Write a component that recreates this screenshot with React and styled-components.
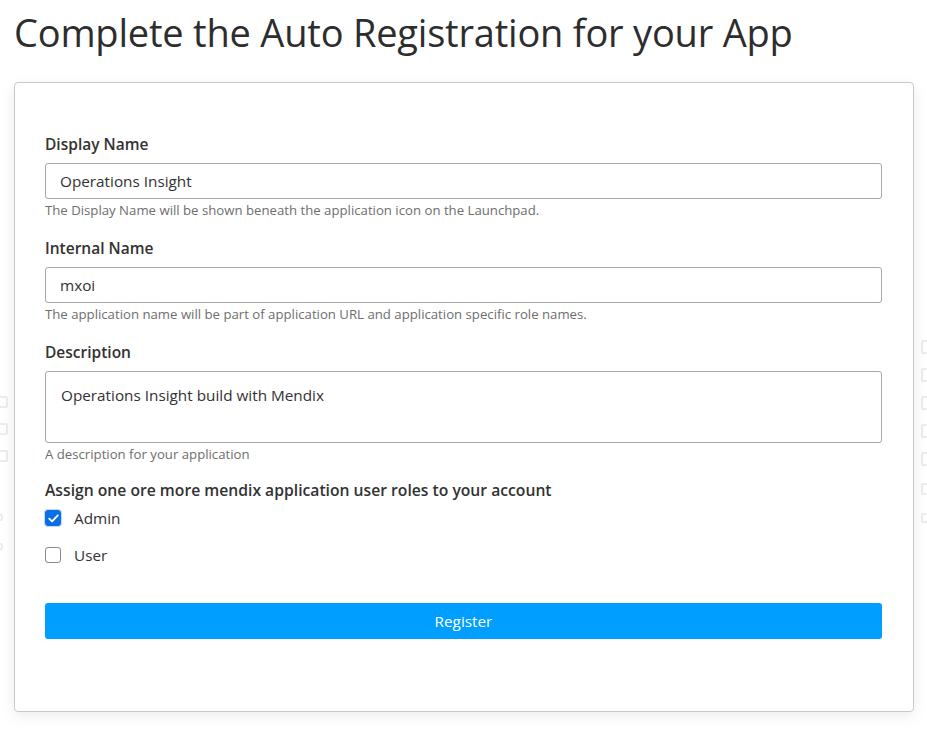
import React from "react";
import styled, { createGlobalStyle } from "styled-components";

const Global = createGlobalStyle`
  html, body { margin: 0; padding: 0; background: #fff; }
  body { font-family: "Open Sans", "Noto Sans", sans-serif; color: #323232; }
  * { box-sizing: border-box; }
`;

const Page = styled.div`
  position: relative;
  padding: 6px 14px 16px 14px;
  overflow: hidden;
`;

const Title = styled.h1`
  margin: 0 0 24px 0;
  font-size: 38px;
  font-weight: 400;
  line-height: 52px;
  color: #2d2d2d;
  letter-spacing: -0.2px;
`;

const Ghost = styled.div`
  position: absolute;
  top: 0;
  ${(p) => (p.$side === "left" ? "left: -4px;" : "right: -6px;")}
  width: 16px;
  height: 100%;
  z-index: 0;
`;

const GhostBox = styled.span`
  position: absolute;
  left: 0;
  width: ${(p) => p.$s}px;
  height: ${(p) => p.$s}px;
  border: 2px solid #ececec;
  border-radius: 2px;
`;

const Card = styled.div`
  position: relative;
  z-index: 1;
  width: 900px;
  background: #fff;
  border: 1px solid #c8c8c8;
  border-radius: 4px;
  box-shadow: 0 4px 14px rgba(0, 0, 0, 0.08);
  padding: 50px 31px 72px 30px;
`;

const Field = styled.div`
  display: flex;
  flex-direction: column;
  margin-bottom: ${(p) => p.$mb || 18}px;
`;

const Label = styled.label`
  font-size: ${(p) => p.$fs || 15.5}px;
  font-weight: 600;
  color: #323232;
  line-height: 22px;
  margin-bottom: ${(p) => p.$mb ?? 8}px;
`;

const Input = styled.div`
  height: ${(p) => p.$h || 36}px;
  border: 1px solid #a8a8a8;
  border-radius: 3px;
  padding: ${(p) => (p.$area ? "13px 15px" : "0 14px")};
  display: flex;
  align-items: ${(p) => (p.$area ? "flex-start" : "center")};
  font-size: 15.3px;
  color: #323232;
  line-height: 20px;
`;

const Hint = styled.div`
  font-size: 13.2px;
  color: #6e6e6e;
  line-height: 18px;
  margin-top: 2px;
`;

const Check = styled.label`
  display: flex;
  align-items: center;
  gap: 13px;
  font-size: 15.3px;
  color: #323232;
  height: 22px;
  margin-bottom: ${(p) => p.$mb || 0}px;
`;

const Box = styled.span`
  width: 16px;
  height: 16px;
  border-radius: 3px;
  border: 1px solid ${(p) => (p.$on ? "#0a6ee8" : "#8a8a8a")};
  background: ${(p) => (p.$on ? "#0a6ee8" : "#fff")};
  display: inline-flex;
  align-items: center;
  justify-content: center;
  box-shadow: ${(p) => (p.$on ? "0 0 0 1px rgba(10,110,232,0.25)" : "none")};
`;

const Button = styled.button`
  display: block;
  width: 100%;
  height: 36px;
  border: none;
  border-radius: 3px;
  background: #009fff;
  color: #fff;
  font-family: inherit;
  font-size: 15.3px;
  margin-top: 37px;
  cursor: pointer;
`;

const leftBoxes = [
  { t: 396, s: 12 },
  { t: 423, s: 12 },
  { t: 450, s: 12 },
  { t: 514, s: 7 },
  { t: 543, s: 7 },
];
const rightBoxes = [
  { t: 340, s: 14 },
  { t: 368, s: 14 },
  { t: 396, s: 14 },
  { t: 424, s: 14 },
  { t: 452, s: 14 },
  { t: 483, s: 12 },
  { t: 513, s: 10 },
];

export default function App() {
  return (
    <>
      <Global />
      <Page>
        <Ghost $side="left">
          {leftBoxes.map((b, i) => (
            <GhostBox key={i} $s={b.s} style={{ top: b.t }} />
          ))}
        </Ghost>
        <Ghost $side="right">
          {rightBoxes.map((b, i) => (
            <GhostBox key={i} $s={b.s} style={{ top: b.t, left: 4 }} />
          ))}
        </Ghost>
        <Title>Complete the Auto Registration for your App</Title>
        <Card>
          <Field>
            <Label>Display Name</Label>
            <Input>Operations Insight</Input>
            <Hint>The Display Name will be shown beneath the application icon on the Launchpad.</Hint>
          </Field>
          <Field>
            <Label>Internal Name</Label>
            <Input>mxoi</Input>
            <Hint>The application name will be part of application URL and application specific role names.</Hint>
          </Field>
          <Field $mb={16}>
            <Label>Description</Label>
            <Input $area $h={72}>Operations Insight build with Mendix</Input>
            <Hint>A description for your application</Hint>
          </Field>
          <Label as="div" $fs={15.7} $mb={6}>Assign one ore more mendix application user roles to your account</Label>
          <Check $mb={15}>
            <Box $on>
              <svg width="11" height="9" viewBox="0 0 11 9">
                <path d="M1.2 4.6 L4.1 7.4 L9.8 1.4" fill="none" stroke="#fff" strokeWidth="1.8" strokeLinecap="round" strokeLinejoin="round" />
              </svg>
            </Box>
            Admin
          </Check>
          <Check>
            <Box />
            User
          </Check>
          <Button>Register</Button>
        </Card>
      </Page>
    </>
  );
}
